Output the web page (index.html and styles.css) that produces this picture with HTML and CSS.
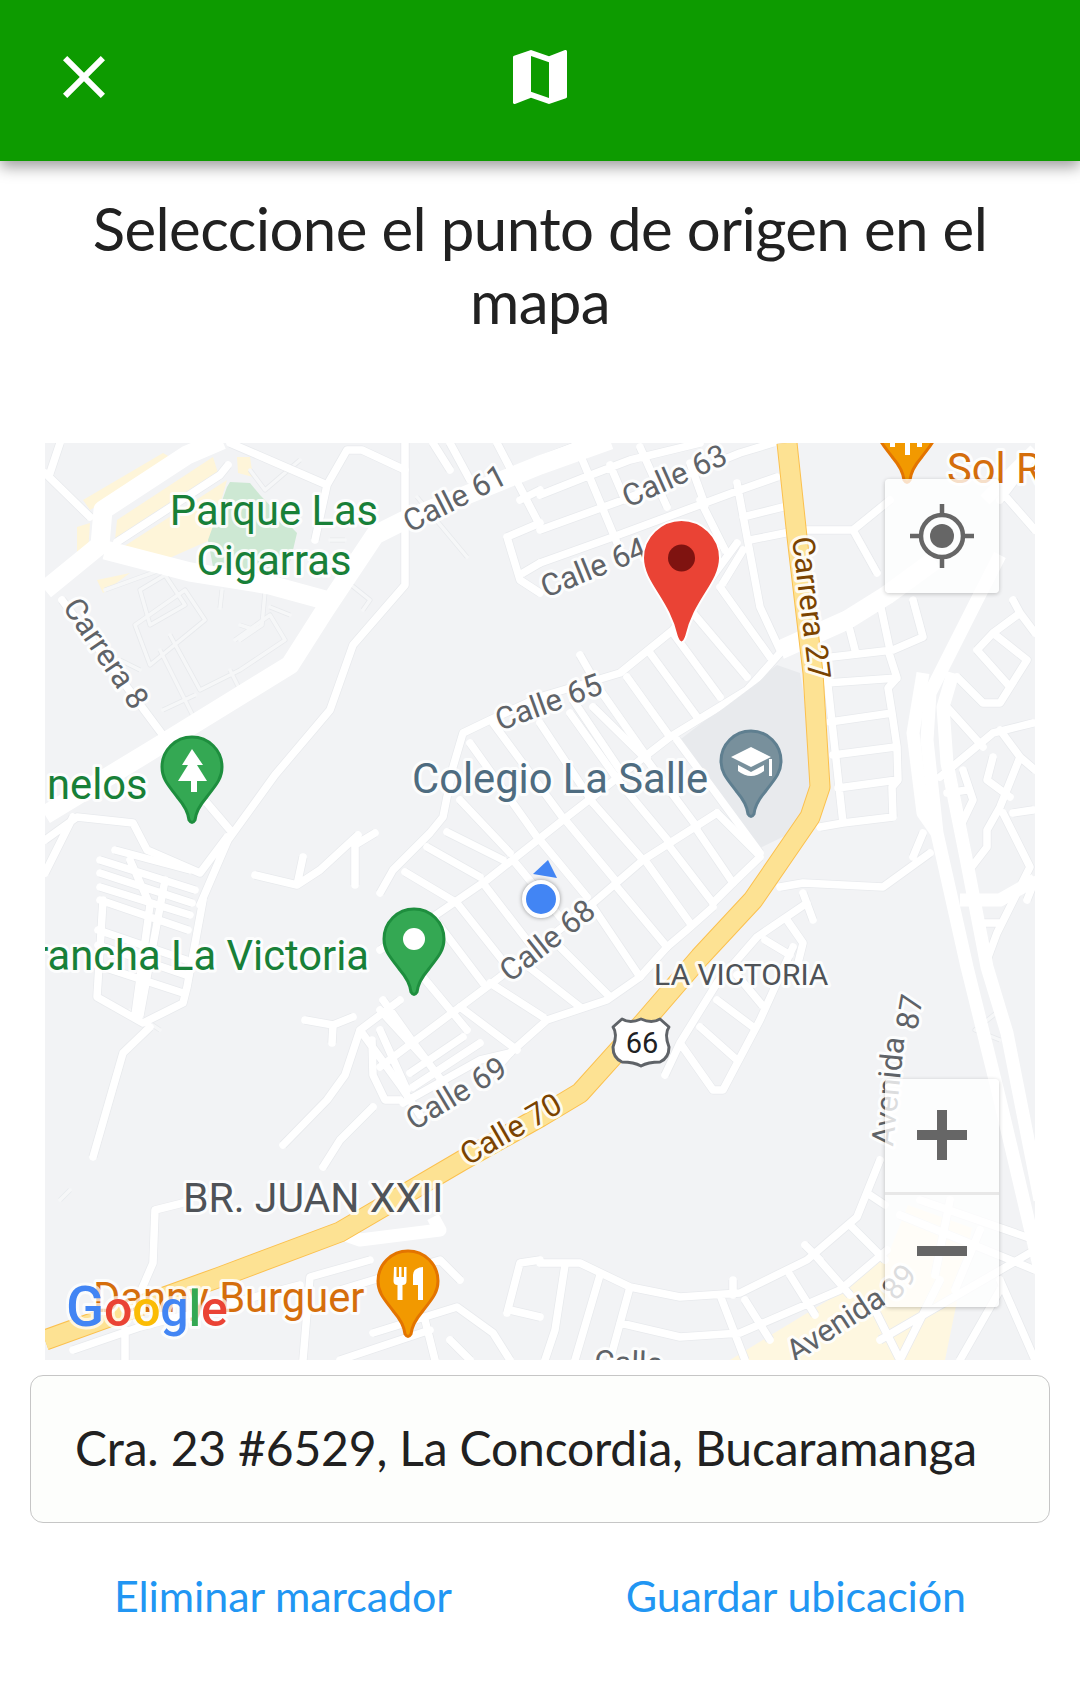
FILE: index.html
```html
<!DOCTYPE html>
<html lang="es">
<head>
<meta charset="utf-8">
<title>Seleccione el punto de origen</title>
<link rel="stylesheet" href="styles.css">
</head>
<body>
<header class="appbar">
  <svg class="appbar-icon appbar-close" viewBox="0 0 24 24"><path d="M19 6.41L17.59 5 12 10.59 6.41 5 5 6.41 10.59 12 5 17.59 6.41 19 12 13.41 17.59 19 19 17.59 13.41 12z"/></svg>
  <svg class="appbar-icon" viewBox="0 0 24 24"><path d="M20.5 3l-.16.03L15 5.1 9 3 3.36 4.9c-.21.07-.36.25-.36.48V20.5c0 .28.22.5.5.5l.16-.03L9 18.9l6 2.1 5.64-1.9c.21-.07.36-.25.36-.48V3.5c0-.28-.22-.5-.5-.5zM15 19l-6-2.11V5l6 2.11V19z"/></svg>
</header>
<main class="content">
  <h1 class="title">Seleccione el punto de origen en el mapa</h1>
  <section class="map">
    <svg class="map-canvas" viewBox="45 443 990 917" width="990" height="917">
      <defs>
        <path id="pin" d="M0-30C16.6-30 30-16.6 30 0C30 13 22 20 14 31C8 38 4 44 3 53Q0 58-3 53C-4 44-8 38-14 31C-22 20-30 13-30 0C-30-16.6-16.6-30 0-30Z"/>
        <g id="r-thin">
          <path d="M417 497L467 557M222 590L220 608M265 592L262 625L240 640M270 607L290 615M240 625L255 630"/>
          <path d="M140 590L165 575L185 605L150 625ZM105 590L160 570M135 625L185 590L205 620L150 665ZM170 635L200 690L240 670L285 640L270 615L235 640M160 650L195 720L240 690L230 670M163 710L195 695"/>
          <path d="M345 580L370 600L363 610M250 470L265 490L300 460M330 540L345 540M120 660L140 670"/>
          <path d="M130 1010L160 1030M60 1200L70 1190M1000 1040L975 1030L1000 1010"/>
        </g>
        <g id="r-street">
          <path d="M60 443L50 473M45 473L90 517M62 600L165 738M230 443L327 485L347 450L362 450L405 470M327 485L315 540M117 542L220 475L228 465"/>
          <path d="M405 443V585L353 645L330 710L275 775L228 840L200 905M207 803L230 830M45 840L77 817L133 823L147 850L200 873L227 837M73 817L45 873M255 875L297 885L320 870L358 835M297 885L303 857M355 885V845L375 833"/>
          <path d="M450 443L470 480M497 443L537 520M507 537L520 580L540 593M520 500L540 490M503 480L540 463M507 537L540 523M523 573L540 563M433 443L450 470"/>
          <path d="M540 495L583 478L630 460L700 443M540 530L623 500L740 453L773 443M540 563L613 537L740 490L777 477M540 460L583 443M577 447L620 550M640 447L667 507M610 465L625 500M737 483L760 607L780 650M743 517L783 507M750 540L800 530M720 587L770 657M743 550L723 583M690 463L705 505M700 500L725 550"/>
          <path d="M780 653L747 690L670 737L563 820L487 880L433 917L380 950M737 543L673 630L620 673L540 697L490 720L463 733L453 767L443 817L430 833L393 870L380 893"/>
          <path d="M627 677L670 737M650 653L697 717M673 633L720 697M693 613L747 677M600 690L647 757M573 700L620 770M580 655L600 690"/>
          <path d="M717 813L643 860L593 903L500 977L460 1007L380 1067M713 907L687 930L667 947L640 977L607 1000L547 1020L510 1053L480 1087M760 857L733 883L713 903M677 740L760 853"/>
          <path d="M537 837L470 743M563 818L493 723M593 803L540 723M620 783L570 713M647 760L593 707M460 800L510 853M447 832L503 860M427 847L480 877M405 872L457 903"/>
          <path d="M433 917L483 983M457 903L510 970M483 883L540 957M513 860L560 917M540 840L587 897M567 822L615 880M593 803L643 860M620 783L670 843M647 760L697 827"/>
          <path d="M490 983L543 1017M520 960L580 1007M550 937L610 997M593 907L640 977M617 887L667 947M647 863L690 923M670 847L713 903M697 830L733 883M717 813L757 853M460 1007L517 1050M423 977L467 1030M380 1010L423 1057M463 1037L410 1073M480 1043L413 1087M380 1030L407 1090"/>
          <path d="M403 1103L480 1060L510 1053M383 1000L415 1045L445 1085M360 1030L400 1085L420 1115M400 1000L360 1030L345 1075L327 1100L283 1145M373 1107L340 1140L323 1167M305 1020L333 1025L353 1017M333 1025L332 1043M400 1100L385 1100L373 1075L372 1040"/>
          <path d="M103 900L97 997L143 1023L183 1003L187 987L203 900M100 860L195 890M100 873L192 903M100 887L190 915M100 900L188 930M98 930L186 960M98 945L186 975M97 965L183 993M130 860L150 905L135 1015M165 880L140 1015M150 1027L123 1053L93 1157M115 850L190 870"/>
          <path d="M807 903L757 937L717 983L680 1043L713 1090L723 1090L760 1020L793 947M700 1027L737 1060M717 1000L753 1027M737 975L762 1005M765 940L790 955M680 1043L665 1075M780 887L803 883L883 887L930 853M913 857L923 833M803 893L813 920M787 920L803 943L797 967"/>
          <path d="M800 530L853 530L877 573M853 530L890 500M823 658L893 650L923 637L913 600M827 683L897 678M830 722L892 713M833 755L895 747M838 788L897 780M843 823L893 817M888 650L897 678L888 688L892 713L897 747L898 780L892 787L893 817M825 658L843 823M820 827L843 823M848 623L855 650M880 603L890 650"/>
          <path d="M540 1263H580L630 1287L680 1297L740 1293L807 1260L857 1217L880 1160M620 1323L680 1337L740 1333L840 1290L887 1250M565 1265L555 1330L545 1360M600 1275L575 1360M630 1287L610 1360M720 1295L745 1360M745 1300L770 1340M790 1275L815 1315M815 1255L850 1295M850 1225L885 1260M870 1195L885 1205M805 1245L820 1260M733 1280V1295"/>
          <path d="M303 1360L310 1277L370 1260M373 1333L457 1307L493 1333L510 1360M507 1313L520 1263L540 1260M510 1310L540 1317M425 1320L435 1360M340 1290L440 1260L460 1280M183 1203L155 1210L153 1263L140 1293M73 1350L140 1327L300 1285M125 1330V1360M340 1360L430 1330M450 1340L470 1360"/>
          <path d="M900 1215L1035 1270M920 1200L1035 1240M880 1340L1035 1250M900 1360L940 1280M960 1360L1000 1290M950 1200L935 1275M980 1230L955 1290M870 1300L900 1360M1000 1280L1035 1360"/>
          <path d="M977 650L993 633L1027 660L1000 703L983 703L957 677M977 650L1010 687M1013 600L1020 613L993 633M1020 613L1035 633M947 707L983 747M940 777L993 733L1033 723M1000 730L1020 757L1035 770M1020 757L1000 807L987 830L987 847L967 873M993 757L987 780L1010 797M963 770L973 800L960 827M947 793L967 790M1003 813L1030 867L997 933L987 960M1013 813L1033 810M980 923H1000M1030 460L1000 500M1000 490L1035 530M1027 900L1035 880"/>
        </g>
        <g id="r-major">
          <path d="M45 590L100 545L103 510L187 455L222 440M105 550L190 572L270 585L325 600"/>
          <path d="M45 815L160 745L290 665L325 610L375 535L405 520L540 465L610 440"/>
          <path d="M780 650L847 620L887 595L935 560"/>
        </g>
        <g id="r-highway">
          <path d="M1000 555L977 600L930 693L927 740L937 833L967 967L1000 1100L1040 1270"/>
          <path d="M923 673L913 733L923 813L937 833"/>
          <path d="M953 673L943 707L947 763L967 863L987 967L1007 1033L1040 1200"/>
          <path d="M340 1233L360 1240L440 1230L433 1217"/>
          <path d="M985 500L1035 450M960 900L1000 900L1035 880"/>
        </g>
      </defs>

      <rect class="land" x="45" y="443" width="990" height="917"/>
      <path class="area-yellow" d="M83 500L163 453L175 460L90 510ZM117 520L213 457L218 473L115 540ZM123 547L227 480L210 540L165 560ZM97 580L130 573L103 593ZM77 527L90 523L88 553L77 563ZM237 457H250L253 477L238 473Z"/>
      <path class="area-yellow area-pale" d="M730 1360L840 1293L890 1250L908 1205L972 1228L945 1360Z"/>
      <path class="area-park" d="M230 482L250 483L260 495L297 533L293 550L287 573L213 567L208 540L227 487Z"/>
      <path class="area-school" d="M677 742L777 665L800 673L810 733L810 803L797 830L760 848Z"/>

      <use href="#r-thin" class="road-thin-case"/>
      <use href="#r-thin" class="road-thin"/>
      <use href="#r-street" class="road-street-case"/>
      <use href="#r-highway" class="road-highway"/>
      <use href="#r-major" class="road-major"/>
      <use href="#r-street" class="road-street"/>
      <path class="area-school" d="M705 722L777 668L795 675L806 733L806 803L792 825L762 843L690 750Z"/>
      <path class="highway-case" d="M787 443L797 537L813 673L820 787L810 817L753 900L700 957L643 1023L580 1093L540 1117L463 1160L340 1232L220 1277L45 1340"/>
      <path class="highway" d="M787 443L797 537L813 673L820 787L810 817L753 900L700 957L643 1023L580 1093L540 1117L463 1160L340 1232L220 1277L45 1340"/>

      <g class="lbl lbl-road">
        <text transform="translate(410 533) rotate(-27)">Calle 61</text>
        <text transform="translate(628 508) rotate(-24)">Calle 63</text>
        <text transform="translate(546 598) rotate(-22)">Calle 64</text>
        <text transform="translate(500 731) rotate(-20)">Calle 65</text>
        <text transform="translate(510 983) rotate(-38)">Calle 68</text>
        <text transform="translate(414 1131) rotate(-31)">Calle 69</text>
        <text transform="translate(62 607) rotate(56)">Carrera 8</text>
        <text transform="translate(893 1147) rotate(-84)">Avenida</text>
        <text transform="translate(917 1031) rotate(-80)">87</text>
        <text transform="translate(795 1363) rotate(-33)">Avenida</text>
        <text transform="translate(896 1302) rotate(-50)">89</text>
        <text transform="translate(594 1372) rotate(2)">Calle</text>
      </g>
      <g class="lbl lbl-brown">
        <text transform="translate(792 538) rotate(83)">Carrera 27</text>
        <text transform="translate(468 1166) rotate(-30)">Calle 70</text>
      </g>
      <g class="lbl lbl-park">
        <text x="274" y="525" text-anchor="middle">Parque Las</text>
        <text x="274" y="575" text-anchor="middle">Cigarras</text>
        <text x="47" y="799">nelos</text>
        <text x="369" y="970" text-anchor="end">rancha La Victoria</text>
      </g>
      <text class="lbl lbl-school" x="412" y="793">Colegio La Salle</text>
      <text class="lbl lbl-hood lbl-hood-s" x="654" y="985">LA VICTORIA</text>
      <text class="lbl lbl-hood" x="183" y="1212">BR. JUAN XXII</text>
      <text class="lbl lbl-food" x="93" y="1312">Danny Burguer</text>
      <text class="lbl lbl-food" x="947" y="483">Sol R</text>

      <use href="#pin" class="pin pin-food" x="907" y="427"/>
      <path class="pin-mark" d="M890 443h5v4h-5zM905 443h5v12h-5zM917 443h5v4h-5z"/>

      <use href="#pin" class="pin pin-green" x="192" y="767"/>
      <path class="pin-mark" d="M192 749l11 16h-6l10 16h-11l1 0v11h-6v-11h-13l10-16h-6z"/>

      <use href="#pin" class="pin pin-green" x="414" y="939"/>
      <circle class="pin-mark" cx="414" cy="939" r="11"/>

      <use href="#pin" class="pin pin-school" x="751" y="761"/>
      <path class="pin-mark" d="M751 747L771 757L751 767L731 757ZM738 765L751 772L764 765V771Q751 781 738 771ZM769 759H772V776H769Z"/>

      <use href="#pin" class="pin pin-food" x="408" y="1281"/>
      <path class="pin-mark" d="M394 1267h2.500v10h2.500v-10h2.500v10h2.500v-10h2.500v14q0 4-4 4v15h-5v-15q-4 0-4-4zM423 1267v33h-5v-15h-5v-10q0-7 10-8z"/>

      <path class="pin-red" d="M681.500 520C702 520 720 537 720 558C720 583 694 600 686 637Q681.500 648 677 637C669 600 643 583 643 558C643 537 661 520 681.500 520Z"/>
      <circle class="pin-red-dot" cx="681.500" cy="558" r="13.500"/>

      <path class="me-arrow" d="M548 860L557 878L533 874Z"/>
      <circle class="me-dot" cx="541" cy="899" r="17"/>

      <path class="shield" d="M622 1019Q630 1024 641 1019Q652 1024 660 1019L669 1027Q664 1034 669 1047Q669 1058 660 1062Q648 1062 641 1066Q634 1062 622 1062Q613 1058 613 1047Q618 1034 613 1027Z"/>
      <text class="shield-text" x="642" y="1053" text-anchor="middle">66</text>

      <text class="logo" x="66" y="1326"><tspan class="g-b g-cap">G</tspan><tspan class="g-r">o</tspan><tspan class="g-y">o</tspan><tspan class="g-b">g</tspan><tspan class="g-g">l</tspan><tspan class="g-r">e</tspan></text>
    </svg>

    <button class="map-btn locate" aria-label="Mi ubicación">
      <svg viewBox="0 0 64 64" width="64" height="64"><circle class="loc-ring" cx="32" cy="32" r="21"/><circle class="loc-dot" cx="32" cy="32" r="12"/><path class="loc-tick" d="M32 0V11M32 53V64M0 32H11M53 32H64"/></svg>
    </button>
    <div class="zoom">
      <button class="zoom-btn" aria-label="Acercar"><svg viewBox="0 0 50 50" width="50" height="50"><path class="zoom-mark" d="M20 0h10v20h20v10H30v20H20V30H0V20h20z"/></svg></button>
      <div class="zoom-divider"></div>
      <button class="zoom-btn" aria-label="Alejar"><svg viewBox="0 0 50 50" width="50" height="50"><path class="zoom-mark" d="M0 20h50v10H0z"/></svg></button>
    </div>
  </section>
  <div class="address">Cra. 23 #6529, La Concordia, Bucaramanga</div>
  <div class="actions">
    <a class="action">Eliminar marcador</a>
    <a class="action">Guardar ubicación</a>
  </div>
</main>
</body>
</html>
```
FILE: styles.css
```css
* { box-sizing: border-box; }
html, body { margin: 0; padding: 0; background: #fff; }
body { width: 1080px; height: 1684px; overflow: hidden; font-family: "Lato", sans-serif; color: #212121; }

.appbar {
  height: 161px;
  position: relative;
  z-index: 2;
  display: flex;
  align-items: center;
  justify-content: center;
  background: #0d9b00;
  box-shadow: 0 6px 14px rgba(0, 0, 0, .38);
  padding-bottom: 7px;
}
.appbar-icon { width: 72px; height: 72px; fill: #fff; }
.appbar-close { position: absolute; left: 48px; top: 41px; }

.content { display: flex; flex-direction: column; align-items: center; }
.title {
  margin: 31px 0 105px;
  width: 960px;
  text-align: center;
  font-size: 60px;
  line-height: 73px;
  font-weight: 400;
  letter-spacing: -.62px;
  color: #212121;
}

.map { position: relative; width: 990px; height: 917px; overflow: hidden; }
.map-canvas { display: block; }
.land { fill: #f2f3f5; }
.area-yellow { fill: #fef5d9; }
.area-pale { fill: #fef7e0; }
.area-park { fill: #cde8d3; }
.area-school { fill: #e8eaed; }

.road-thin-case { fill: none; stroke: #e7e9ec; stroke-width: 5px; stroke-linejoin: round; }
.road-thin { fill: none; stroke: #f6f7f8; stroke-width: 3.500px; stroke-linejoin: round; stroke-linecap: round; }
.road-street-case { fill: none; stroke: #e8eaed; stroke-width: 9px; stroke-linejoin: round; }
.road-street { fill: none; stroke: #fff; stroke-width: 7.500px; stroke-linejoin: round; stroke-linecap: round; }
.road-highway { fill: none; stroke: #fff; stroke-width: 13px; stroke-linejoin: round; }
.road-major { fill: none; stroke: #fff; stroke-width: 19px; stroke-linejoin: round; }
.highway-case { fill: none; stroke: #fbc04e; stroke-width: 21px; stroke-linejoin: round; }
.highway { fill: none; stroke: #fde293; stroke-width: 19px; stroke-linejoin: round; }

.lbl { font-family: "Roboto", sans-serif; paint-order: stroke; stroke: rgba(255, 255, 255, .85); stroke-width: 6px; stroke-linejoin: round; }
.lbl-road { font-size: 31px; fill: #5f6368; }
.lbl-brown { font-size: 31px; fill: #7a4300; }
.lbl-park { font-size: 41.700px; fill: #188038; }
.lbl-school { font-size: 41.700px; fill: #4e6c80; }
.lbl-hood { font-size: 41px; fill: #4f5358; }
.lbl-hood-s { font-size: 30px; }
.lbl-food { font-size: 41.700px; fill: #d56e0c; }

.pin { stroke-width: 3px; }
.pin-green { fill: #34a853; stroke: #1e8e3e; }
.pin-school { fill: #78909c; stroke: #5f7f90; }
.pin-food { fill: #f29900; stroke: #e37400; }
.pin-mark { fill: #fff; }
.pin-red { fill: #ea4335; stroke: #fff; stroke-width: 2px; }
.pin-red-dot { fill: #7f1310; }
.me-arrow { fill: #4285f4; }
.me-dot { fill: #4285f4; stroke: #fff; stroke-width: 4px; filter: drop-shadow(0 0 2px rgba(0, 0, 0, .4)); }
.shield { fill: #fff; stroke: #5f6368; stroke-width: 3px; stroke-linejoin: round; }
.shield-text { font-family: "Roboto", sans-serif; font-size: 29px; fill: #202124; }

.logo { font-family: "Roboto", sans-serif; font-size: 50px; font-weight: 500; letter-spacing: -.2px; paint-order: stroke; stroke: rgba(255, 255, 255, .7); stroke-width: 6px; stroke-linejoin: round; }
.g-cap { font-size: 56px; }
.g-b { fill: #4285f4; }
.g-r { fill: #ea4335; }
.g-y { fill: #fbbc05; }
.g-g { fill: #34a853; }

.map-btn, .zoom-btn {
  display: flex;
  align-items: center;
  justify-content: center;
  width: 114px;
  padding: 0;
  border: 0;
  background: transparent;
}
.locate, .zoom {
  position: absolute;
  left: 840px;
  width: 114px;
  border-radius: 4px;
  background: rgba(255, 255, 255, .78);
  box-shadow: 0 1px 4px rgba(0, 0, 0, .22);
}
.locate { top: 36px; height: 114px; }
.zoom { top: 636px; height: 228px; }
.zoom-btn { height: 112.500px; }
.zoom-divider { height: 3px; background: rgba(230, 230, 230, .9); }
.loc-ring { fill: none; stroke: #666; stroke-width: 4.500px; }
.loc-dot { fill: #666; }
.loc-tick { stroke: #666; stroke-width: 4.500px; fill: none; }
.zoom-mark { fill: #666; }

.address {
  margin-top: 15px;
  width: 1020px;
  height: 148px;
  display: flex;
  align-items: center;
  padding-left: 44px;
  padding-bottom: 4px;
  border: 1.500px solid #c6c6c6;
  border-radius: 13px;
  background: #fdfefc;
  font-size: 48px;
  letter-spacing: -.17px;
  color: #212121;
  white-space: nowrap;
}

.actions {
  width: 1080px;
  display: flex;
  justify-content: center;
  gap: 174px;
  margin-top: 45px;
}
.action { font-size: 43px; line-height: 56px; letter-spacing: -.1px; color: #2196f3; }
```
